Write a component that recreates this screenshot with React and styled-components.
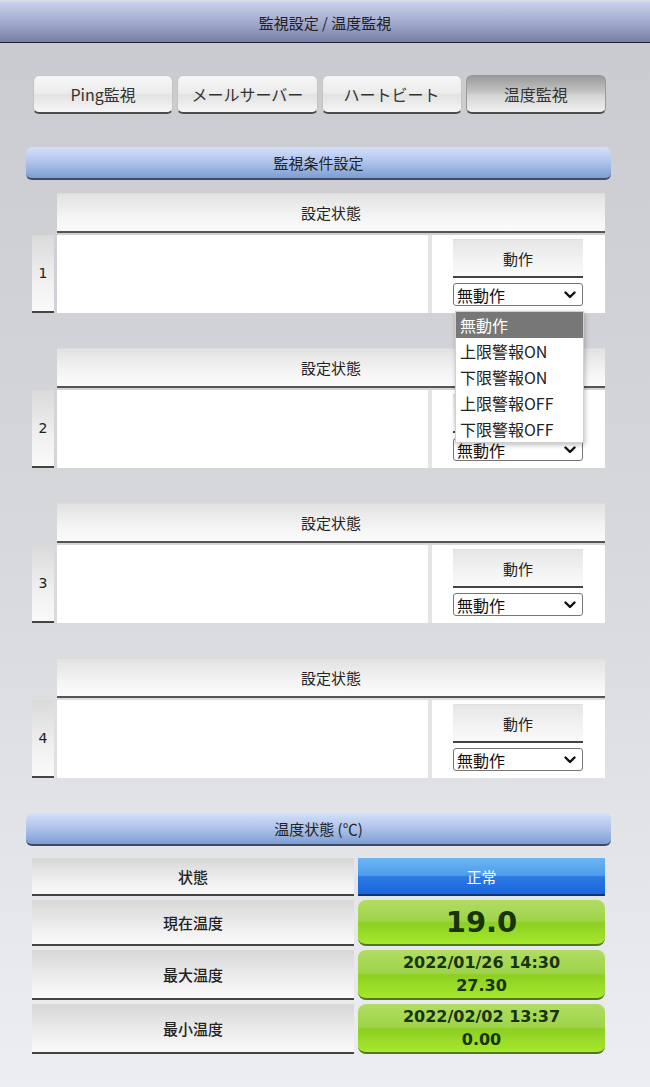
import React from "react";
import styled, { createGlobalStyle } from "styled-components";

const Global = createGlobalStyle`
  html, body { margin: 0; padding: 0; }
  body {
    font-family: "Noto Sans CJK JP", "DejaVu Sans", sans-serif;
    color: #222;
  }
`;

const Page = styled.div`
  min-height: 1087px;
  background: linear-gradient(to bottom, #c8cacf 0%, #d6d8dc 50%, #eceef2 100%);
  display: flex;
  flex-direction: column;
`;

const TitleBar = styled.div`
  height: 40px;
  border-top: 2px solid #d9dbe2;
  border-bottom: 1px solid #1e2030;
  background: linear-gradient(to bottom, #c9d0ee 0%, #a3abcf 50%, #767ea4 100%);
  display: flex;
  align-items: center;
  justify-content: center;
  font-size: 15px;
  color: #222;
`;

const Main = styled.div`
  padding: 32px 39px 30px 26px;
  display: flex;
  flex-direction: column;
`;

const TabRow = styled.div`
  display: flex;
  gap: 4px;
  margin: 0 5px 0 7px;
`;

const Tab = styled.div`
  flex: 1;
  height: 36px;
  box-sizing: content-box;
  border: 1px solid ${(p) => (p.$active ? "#9a9a9a" : "#c4c4c4")};
  border-bottom: 2px solid #4c4c4c;
  border-radius: 6px;
  display: flex;
  align-items: center;
  justify-content: center;
  font-size: 16px;
  color: #333;
  background: ${(p) =>
    p.$active
      ? "linear-gradient(to bottom, #9a9a9a 0%, #c4c4c4 45%, #d6d6d6 55%, #f0f0f0 100%)"
      : "linear-gradient(to bottom, #f6f6f6 0%, #ececec 48%, #e2e2e2 52%, #f6f6f6 100%)"};
`;

const SectionHeader = styled.div`
  margin-top: ${(p) => p.$mt}px;
  height: 31px;
  border-radius: 6px;
  border-bottom: 2px solid #3e4a66;
  background: linear-gradient(to bottom, #d4e0fa 0%, #aec2ea 50%, #7c9ed2 100%);
  display: flex;
  align-items: center;
  justify-content: center;
  font-size: 15px;
  color: #222;
`;

const Block = styled.div`
  margin: ${(p) => p.$mt}px 6px 0 6px;
  display: grid;
  grid-template-columns: 22px 1fr;
  column-gap: 3px;
  row-gap: 2px;
`;

const BlockHeader = styled.div`
  grid-column: 2;
  height: 37px;
  border-top: 1px solid #dcdcdc;
  border-bottom: 2px solid #555;
  background: linear-gradient(to bottom, #e2e2e2 0%, #f4f4f4 60%, #fbfbfb 100%);
  display: flex;
  align-items: center;
  justify-content: center;
  font-size: 15px;
`;

const NumCell = styled.div`
  height: 76px;
  border-bottom: 2px solid #444;
  background: linear-gradient(to bottom, #dadada 0%, #f0f0f0 60%, #fafafa 100%);
  display: flex;
  align-items: center;
  justify-content: center;
  font-size: 14px;
  font-family: "DejaVu Sans", sans-serif;
`;

const RowBody = styled.div`
  display: flex;
  gap: 4px;
  background: #e4e4e4;
  height: 78px;
`;

const Blank = styled.div`
  flex: 1;
  background: #fff;
`;

const ActionCell = styled.div`
  width: 173px;
  background: #fff;
  padding: 4px 22px 0 21px;
  box-sizing: border-box;
  display: flex;
  flex-direction: column;
  gap: 5px;
`;

const ActionButton = styled.div`
  height: 36px;
  border-top: 1px solid #e0e0e0;
  border-bottom: 2px solid #444;
  background: linear-gradient(to bottom, #e6e6e6 0%, #f3f3f3 60%, #fafafa 100%);
  display: flex;
  align-items: center;
  justify-content: center;
  font-size: 15px;
`;

const SelectWrap = styled.div`
  position: relative;
`;

const SelectBox = styled.div`
  height: 21px;
  border: 1px solid #767676;
  border-radius: 3px;
  background: #fff;
  display: flex;
  align-items: center;
  justify-content: space-between;
  padding: 0 6px 0 3px;
  font-size: 16px;
  color: #111;
`;

const Menu = styled.div`
  position: absolute;
  top: 28px;
  left: 2px;
  width: 127px;
  z-index: 10;
  background: #fff;
  border: 1px solid #d0d0d0;
  box-shadow: 1px 2px 5px rgba(0, 0, 0, 0.25);
  display: flex;
  flex-direction: column;
`;

const MenuItem = styled.div`
  height: 26px;
  display: flex;
  align-items: center;
  padding-left: 4px;
  font-size: 16px;
  color: ${(p) => (p.$selected ? "#fff" : "#222")};
  background: ${(p) => (p.$selected ? "#777" : "#fff")};
`;

const TempGrid = styled.div`
  margin: 12px 6px 0 6px;
  display: grid;
  grid-template-columns: 322px 1fr;
  gap: 4px;
`;

const Label = styled.div`
  height: ${(p) => p.$h}px;
  border-top: 1px solid #d8d8d8;
  border-bottom: 2px solid #444;
  background: linear-gradient(to bottom, #d8d8d8 0%, #ececec 55%, #fafafa 100%);
  display: flex;
  align-items: center;
  justify-content: center;
  font-size: 15px;
  font-weight: 500;
`;

const StatusValue = styled.div`
  height: 36px;
  border-bottom: 2px solid #10367a;
  background: linear-gradient(to bottom, #6eb6f2 0%, #4d9cee 48%, #2a7ae6 52%, #1b66dc 100%);
  display: flex;
  align-items: center;
  justify-content: center;
  font-size: 15px;
  color: #fff;
`;

const GreenValue = styled.div`
  height: ${(p) => p.$h}px;
  border-radius: 8px;
  border-bottom: 2px solid #4e7a1c;
  background: linear-gradient(to bottom, #b2dc62 0%, #9fd448 48%, #8dcf22 52%, #a6e82c 100%);
  display: flex;
  flex-direction: column;
  align-items: center;
  justify-content: center;
  font-family: "DejaVu Sans", sans-serif;
  font-weight: bold;
  color: #17340c;
  font-size: ${(p) => p.$fs}px;
  line-height: ${(p) => (p.$lh ? p.$lh + "px" : "1")};
`;

const Chevron = () => (
  <svg width="12" height="8" viewBox="0 0 12 8">
    <path d="M1.5 1.5 L6 6 L10.5 1.5" fill="none" stroke="#111" strokeWidth="2.4" strokeLinecap="round" strokeLinejoin="round" />
  </svg>
);

const options = ["無動作", "上限警報ON", "下限警報ON", "上限警報OFF", "下限警報OFF"];

function ConditionBlock({ n, mt, open }) {
  return (
    <Block $mt={mt}>
      <BlockHeader>設定状態</BlockHeader>
      <NumCell>{n}</NumCell>
      <RowBody>
        <Blank />
        <ActionCell>
          <ActionButton>動作</ActionButton>
          <SelectWrap>
            <SelectBox>
              <span>無動作</span>
              <Chevron />
            </SelectBox>
            {open && (
              <Menu>
                {options.map((o, i) => (
                  <MenuItem key={o} $selected={i === 0}>{o}</MenuItem>
                ))}
              </Menu>
            )}
          </SelectWrap>
        </ActionCell>
      </RowBody>
    </Block>
  );
}

export default function App() {
  return (
    <>
      <Global />
      <Page>
        <TitleBar>監視設定 / 温度監視</TitleBar>
        <Main>
          <TabRow>
            <Tab>Ping監視</Tab>
            <Tab>メールサーバー</Tab>
            <Tab>ハートビート</Tab>
            <Tab $active>温度監視</Tab>
          </TabRow>
          <SectionHeader $mt={33}>監視条件設定</SectionHeader>
          <ConditionBlock n={1} mt={13} open />
          <ConditionBlock n={2} mt={35} />
          <ConditionBlock n={3} mt={35} />
          <ConditionBlock n={4} mt={35} />
          <SectionHeader $mt={35}>温度状態 (℃)</SectionHeader>
          <TempGrid>
            <Label $h={35}>状態</Label>
            <StatusValue>正常</StatusValue>
            <Label $h={43}>現在温度</Label>
            <GreenValue $h={44} $fs={29}>19.0</GreenValue>
            <Label $h={47}>最大温度</Label>
            <GreenValue $h={48} $fs={16} $lh={23}>
              <span>2022/01/26 14:30</span>
              <span>27.30</span>
            </GreenValue>
            <Label $h={47}>最小温度</Label>
            <GreenValue $h={48} $fs={16} $lh={23}>
              <span>2022/02/02 13:37</span>
              <span>0.00</span>
            </GreenValue>
          </TempGrid>
        </Main>
      </Page>
    </>
  );
}
